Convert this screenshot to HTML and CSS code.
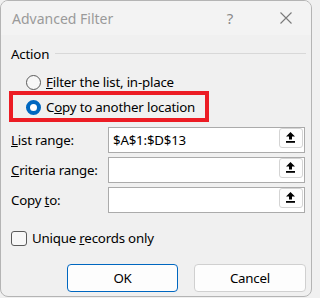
FILE: index.html
```html
<!DOCTYPE html>
<html>
<head>
<meta charset="utf-8">
<link rel="stylesheet" href="styles.css">
</head>
<body>
<div class="dialog">
  <div class="titlebar">
    <span class="title">Advanced Filter</span>
    <span class="help">?</span>
    <svg class="close" width="12" height="12" viewBox="0 0 12 12"><path d="M0.5 0.5 L11.5 11.5 M11.5 0.5 L0.5 11.5" stroke="#7a7a7a" stroke-width="1.1" fill="none"/></svg>
  </div>
  <div class="content">
    <div class="group-head"><span>Action</span><span class="rule"></span></div>
    <div class="radio-row"><span class="radio"></span><span><u>F</u>ilter the list, in-place</span></div>
    <div class="radio-row marked"><span class="radio checked"></span><span>C<u>o</u>py to another location</span><span class="mark"></span></div>
    <div class="fields">
      <div class="field-row">
        <span class="flabel"><u>L</u>ist range:</span>
        <div class="input"><span class="val">$A$1:$D$13</span><span class="pick"><svg width="24" height="20" viewBox="0 0 24 20"><path d="M11.5 4 L7 8.5 H10 V11.5 H13 V8.5 H16 Z" fill="#000"/><rect x="7" y="13" width="9" height="1.8" fill="#000"/></svg></span></div>
      </div>
      <div class="field-row">
        <span class="flabel"><u>C</u>riteria range:</span>
        <div class="input"><span class="val"></span><span class="pick"><svg width="24" height="20" viewBox="0 0 24 20"><path d="M11.5 4 L7 8.5 H10 V11.5 H13 V8.5 H16 Z" fill="#000"/><rect x="7" y="13" width="9" height="1.8" fill="#000"/></svg></span></div>
      </div>
      <div class="field-row">
        <span class="flabel">Copy <u>t</u>o:</span>
        <div class="input"><span class="val"></span><span class="pick"><svg width="24" height="20" viewBox="0 0 24 20"><path d="M11.5 4 L7 8.5 H10 V11.5 H13 V8.5 H16 Z" fill="#000"/><rect x="7" y="13" width="9" height="1.8" fill="#000"/></svg></span></div>
      </div>
    </div>
    <div class="check-row"><span class="checkbox"></span><span>Unique <u>r</u>ecords only</span></div>
    <div class="buttons">
      <button class="btn primary">OK</button>
      <button class="btn">Cancel</button>
    </div>
  </div>
</div>
</body>
</html>
```

FILE: styles.css
```css
html, body {
  margin: 0;
  padding: 0;
  background: #f0f0f0;
  overflow: hidden;
}
.dialog {
  width: 312px;
  height: 297px;
  box-sizing: border-box;
  border: 1px solid #b4b4b4;
  border-radius: 8px;
  background: #f0f0f0;
  overflow: hidden;
  font-family: "Noto Sans", "Open Sans", sans-serif;
  font-size: 13.3px;
  letter-spacing: -0.2px;
  color: #000;
}
.titlebar {
  height: 34px;
  background: #f3f3f3;
  display: flex;
  align-items: center;
}
.title {
  flex: 1;
  padding-left: 11px;
  font-size: 14px;
  letter-spacing: 0;
  color: #9a9a9a;
}
.help {
  font-size: 15px;
  color: #8a8a8a;
  margin-right: 47px;
}
.close {
  margin-right: 19px;
}
.content {
  padding: 0 5px 0 10px;
}
.group-head {
  margin-top: 9px;
  height: 20px;
  display: flex;
  align-items: center;
  line-height: 20px;
}
.rule {
  flex: 1;
  height: 1px;
  background: #d8d8d8;
  margin-left: 6px;
  margin-top: -1px;
}
.radio-row {
  position: relative;
  display: flex;
  align-items: center;
  height: 20px;
  line-height: 20px;
  padding-left: 15px;
  margin-top: 8px;
}
.radio-row + .radio-row {
  margin-top: 5px;
}
.radio {
  width: 15px;
  height: 15px;
  box-sizing: border-box;
  border: 1px solid #5a5a5a;
  border-radius: 50%;
  background: #f7f7f7;
  margin-right: 5px;
}
.radio.checked {
  border: 4.5px solid #0067c0;
  background: #fff;
}
.mark {
  position: absolute;
  left: -2px;
  top: -6px;
  width: 200px;
  height: 31px;
  box-sizing: border-box;
  border: 4px solid #ec1c24;
}
.fields {
  margin-top: 10px;
  display: flex;
  flex-direction: column;
  gap: 4px;
}
.field-row {
  display: flex;
  align-items: center;
  height: 26px;
}
.flabel {
  width: 97px;
}
.input {
  width: 197px;
  height: 26px;
  box-sizing: border-box;
  border: 1px solid #ababab;
  background: #fff;
  display: flex;
  align-items: flex-start;
}
.val {
  flex: 1;
  padding-left: 4px;
  line-height: 24px;
}
.pick {
  width: 24px;
  height: 20px;
  box-sizing: border-box;
  border: 1px solid #d4d4d4;
  border-radius: 3px;
  background: #fdfdfd;
  margin-right: 1px;
  display: flex;
}
.pick svg {
  margin: -1px;
}
.check-row {
  margin-top: 17px;
  display: flex;
  align-items: center;
  height: 16px;
  line-height: 16px;
}
.checkbox {
  width: 16px;
  height: 15px;
  box-sizing: border-box;
  border: 1px solid #5a5a5a;
  border-radius: 3px;
  background: #f7f7f7;
  margin-right: 5px;
}
.buttons {
  margin-top: 18px;
  display: flex;
  justify-content: flex-end;
  gap: 16px;
}
.btn {
  height: 28px;
  box-sizing: border-box;
  border: 1px solid #d0d0d0;
  border-radius: 4px;
  background: #fdfdfd;
  font-family: "Noto Sans", "Open Sans", sans-serif;
  font-size: 13.3px;
  letter-spacing: -0.2px;
  color: #000;
  padding: 0;
  width: 112px;
}
.btn.primary {
  width: 111px;
  border-color: #0067c0;
}
```
